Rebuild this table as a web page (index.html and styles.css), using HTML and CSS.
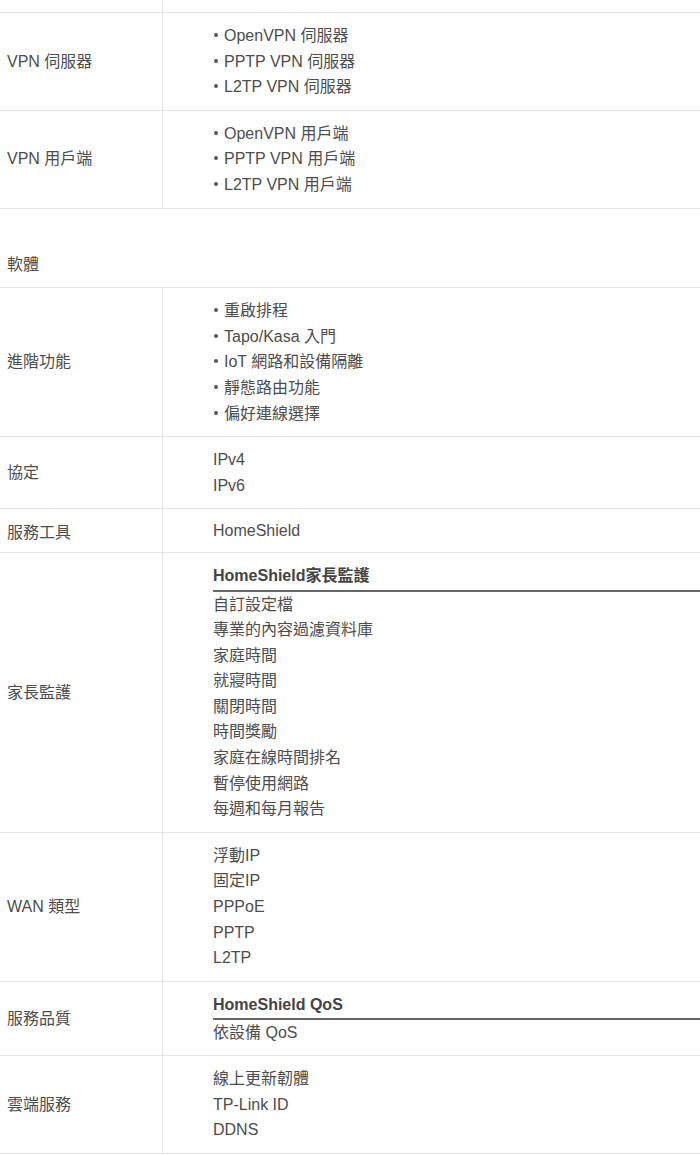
FILE: index.html
```html
<!DOCTYPE html>
<html lang="zh-Hant">
<head>
<meta charset="utf-8">
<title>規格</title>
<link rel="stylesheet" href="styles.css">
</head>
<body>
<div class="spec">
  <div class="row row-top">
    <div class="label"></div>
    <div class="value"></div>
  </div>

  <div class="row">
    <div class="label">VPN 伺服器</div>
    <div class="value">
      <ul class="bullets">
        <li>OpenVPN 伺服器</li>
        <li>PPTP VPN 伺服器</li>
        <li>L2TP VPN 伺服器</li>
      </ul>
    </div>
  </div>

  <div class="row">
    <div class="label">VPN 用戶端</div>
    <div class="value">
      <ul class="bullets">
        <li>OpenVPN 用戶端</li>
        <li>PPTP VPN 用戶端</li>
        <li>L2TP VPN 用戶端</li>
      </ul>
    </div>
  </div>

  <div class="section">軟體</div>

  <div class="row">
    <div class="label">進階功能</div>
    <div class="value">
      <ul class="bullets">
        <li>重啟排程</li>
        <li>Tapo/Kasa 入門</li>
        <li>IoT 網路和設備隔離</li>
        <li>靜態路由功能</li>
        <li>偏好連線選擇</li>
      </ul>
    </div>
  </div>

  <div class="row">
    <div class="label">協定</div>
    <div class="value">
      <div class="line">IPv4</div>
      <div class="line">IPv6</div>
    </div>
  </div>

  <div class="row row-tight">
    <div class="label label-low">服務工具</div>
    <div class="value">
      <div class="line">HomeShield</div>
    </div>
  </div>

  <div class="row">
    <div class="label">家長監護</div>
    <div class="value">
      <div class="group-title">HomeShield家長監護</div>
      <div class="line">自訂設定檔</div>
      <div class="line">專業的內容過濾資料庫</div>
      <div class="line">家庭時間</div>
      <div class="line">就寢時間</div>
      <div class="line">關閉時間</div>
      <div class="line">時間獎勵</div>
      <div class="line">家庭在線時間排名</div>
      <div class="line">暫停使用網路</div>
      <div class="line">每週和每月報告</div>
    </div>
  </div>

  <div class="row">
    <div class="label">WAN 類型</div>
    <div class="value">
      <div class="line">浮動IP</div>
      <div class="line">固定IP</div>
      <div class="line">PPPoE</div>
      <div class="line">PPTP</div>
      <div class="line">L2TP</div>
    </div>
  </div>

  <div class="row">
    <div class="label">服務品質</div>
    <div class="value value-qos">
      <div class="group-title">HomeShield QoS</div>
      <div class="line">依設備 QoS</div>
    </div>
  </div>

  <div class="row">
    <div class="label">雲端服務</div>
    <div class="value">
      <div class="line">線上更新韌體</div>
      <div class="line">TP-Link ID</div>
      <div class="line">DDNS</div>
    </div>
  </div>
</div>
</body>
</html>
```

FILE: styles.css
```css
html, body {
  margin: 0;
  padding: 0;
  background: #ffffff;
}

body {
  overflow: hidden;
  font-family: "Liberation Sans", Arial, "Noto Sans CJK TC", sans-serif;
  font-size: 16px;
  line-height: 25.6px;
  color: #4d4d4d;
}

.spec {
  width: 100%;
}

.row {
  display: flex;
  border-bottom: 1px solid #e6e6e6;
}

.row-top {
  height: 12px;
}

.label {
  box-sizing: border-box;
  width: 163px;
  flex: none;
  border-right: 1px solid #e6e6e6;
  padding-left: 7px;
  display: flex;
  align-items: center;
}

.value {
  flex: 1;
  min-width: 0;
  padding: 10px 0 10px 50px;
}

.row-top .value {
  padding: 0;
}

.row-tight .value {
  padding: 9px 0 8px 50px;
}

.value-qos {
  padding-bottom: 9px;
}

.label-low {
  padding-top: 5px;
}

.bullets {
  list-style: none;
  margin: 0;
  padding: 0;
}

.bullets li::before {
  content: "";
  display: inline-block;
  width: 4px;
  height: 4px;
  border-radius: 50%;
  background: #555555;
  margin: 0 6px 0 1px;
  vertical-align: 4px;
}

.section {
  border-bottom: 1px solid #e6e6e6;
  padding: 43px 0 10px 7px;
}

.group-title {
  font-weight: bold;
  color: #444444;
  border-bottom: 2px solid #666666;
  padding-bottom: 1px;
}
```
